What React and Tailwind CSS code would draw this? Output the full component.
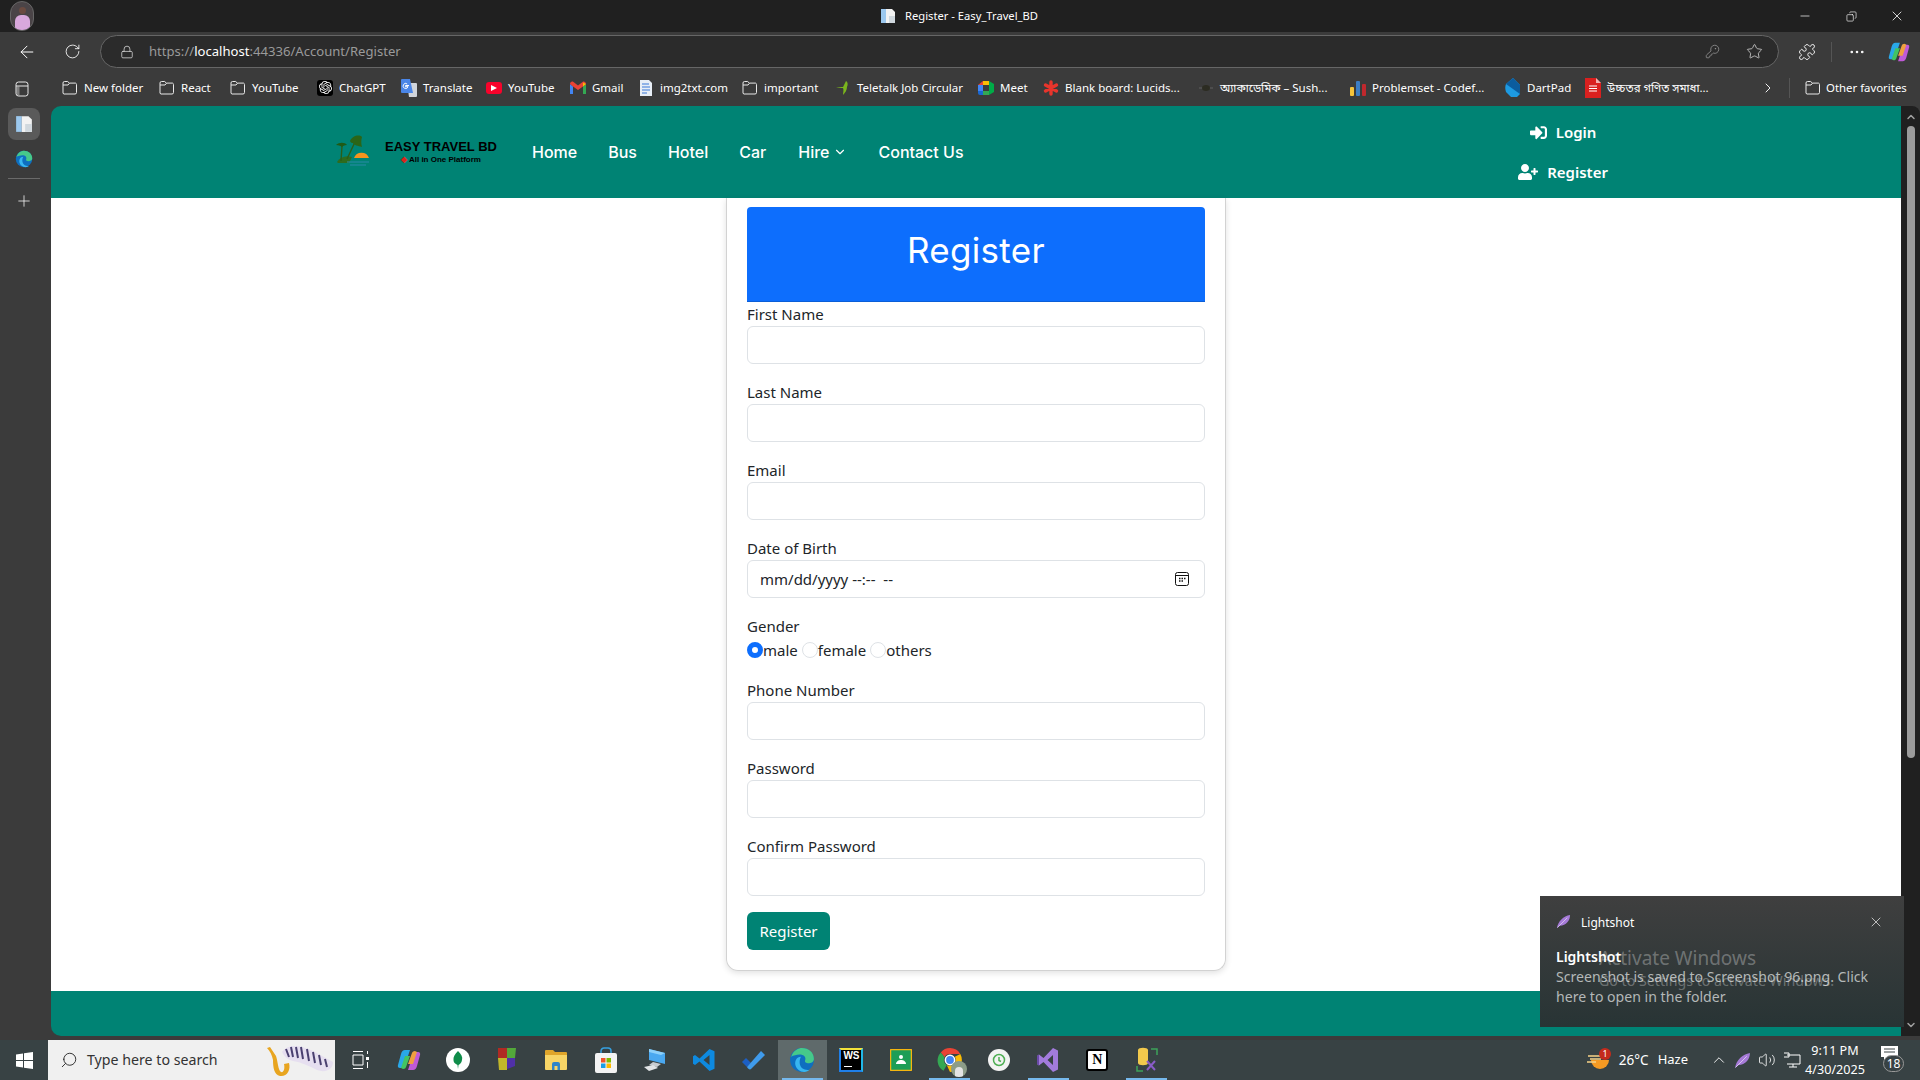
import { ArrowLeft, RotateCw, Lock, KeyRound, Star, Puzzle, MoreHorizontal, ChevronRight, ChevronDown, ChevronUp, Plus, Minus, X, Search, Volume2, Copy } from 'lucide-react'
import { FaSignInAlt, FaUserPlus } from 'react-icons/fa'
import { SiOpenai } from 'react-icons/si'

const FolderIcon = () => (
  <svg width="16" height="16" viewBox="0 0 16 16" fill="none" stroke="#e8e8e8" strokeWidth="1">
    <path d="M2.5 1.5h3.2l1.6 1.6h6.2a1.5 1.5 0 0 1 1 1.4v8a1.5 1.5 0 0 1-1.5 1.5h-10A1.5 1.5 0 0 1 1 13V3a1.5 1.5 0 0 1 1.5-1.5Z" />
    <path d="M1 5h5l1.5-1.8" />
  </svg>
)

const PageIcon = ({ size = 16 }) => (
  <svg width={size} height={size} viewBox="0 0 16 16">
    <path d="M1 1h5v14H1z" fill="#9cc8ee" />
    <path d="M6 1h6l3 3v11H6z" fill="#f2f2f2" />
    <path d="M9 8h6v7H9z" fill="#d0d8de" />
  </svg>
)

const Feather = ({ size = 16 }) => (
  <svg width={size} height={size} viewBox="0 0 16 16">
    <path d="M1 15C2 8 8 2 15 1c0 6-4 11-11 11.5L1 15Z" fill="#a67bd8" />
    <path d="M1.5 14.5 12 4" stroke="#e2d0f5" strokeWidth="0.8" fill="none" />
  </svg>
)

const Edge = ({ size = 16 }) => (
  <svg width={size} height={size} viewBox="0 0 24 24">
    <circle cx="12" cy="12" r="11" fill="#0f6fbf" />
    <path d="M2 9C4 3 9 1 12 1c6 0 11 4 11 10 0 3-3 4-5 4-2 0-4-1-3-3 1-3-2-5-5-5-3 0-6 1-8 2Z" fill="#46c98a" />
    <path d="M11 9c-4 0-6 4-5 8 1 3 4 6 8 6 2 0 4-1 5-2-4 1-8-1-9-5-.5-3 0-5 1-7Z" fill="#38b6f0" />
  </svg>
)

const Copilot = ({ size = 20 }) => (
  <svg width={size} height={size} viewBox="0 0 24 24">
    <path d="M8 2h5l-5 15c-.5 2-2 3-3.500 3H3c-2 0-2.500-1.500-2-3L4 6c.7-2.500 2-4 4-4Z" fill="#29a8e8" />
    <path d="M4 20 8 8h5l-4 11c-.5 1-1 2-3 2Z" fill="#43c463" />
    <path d="M16 22h-5l5-15c.5-2 2-3 3.500-3H21c2 0 2.500 1.500 2 3l-3 11c-.7 2.500-2 4-4 4Z" fill="#c05ad8" />
    <path d="M20 4l-4 12h-5l4-11c.5-1 1-2 3-2Z" fill="#f0a040" />
  </svg>
)

function YouTubeIcon() {
  return (
    <span className="w-4 h-3 rounded-[3px] bg-[#f8032b] flex items-center justify-center">
      <svg width="6" height="6" viewBox="0 0 6 6"><path d="M0 0l6 3-6 3z" fill="#fff" /></svg>
    </span>
  )
}

const bookmarks = [
  { label: 'New folder', w: 'w-[97px]', icon: <FolderIcon /> },
  { label: 'React', w: 'w-[71px]', icon: <FolderIcon /> },
  { label: 'YouTube', w: 'w-[87px]', icon: <FolderIcon /> },
  { label: 'ChatGPT', w: 'w-[84px]', icon: <span className="w-4 h-4 rounded-[3px] bg-black flex items-center justify-center"><SiOpenai size={13} color="#fff" /></span> },
  {
    label: 'Translate', w: 'w-[85px]', icon: (
      <svg width="16" height="18" viewBox="0 0 16 18">
        <path d="M6 4h9a1 1 0 0 1 1 1v12a1 1 0 0 1-1 1H8Z" fill="#d0d4da" />
        <path d="M1 0h8l3 14H1a1 1 0 0 1-1-1V1a1 1 0 0 1 1-1Z" fill="#4a86e8" />
        <path d="M8 6.500H4.500v1.200H7A2.500 2.500 0 1 1 6.200 5" stroke="#fff" strokeWidth="1" fill="none" />
      </svg>
    ),
  },
  { label: 'YouTube', w: 'w-[84px]', icon: <YouTubeIcon /> },
  {
    label: 'Gmail', w: 'w-[68px]', icon: (
      <svg width="16" height="14" viewBox="0 0 16 14">
        <path d="M0 3v10h3V5.500z" fill="#4285f4" />
        <path d="M13 13h3V3l-3 2.500z" fill="#34a853" />
        <path d="M0 3c0-2 2-3 3.500-2L8 4.500l4.500-3.500C14 0 16 1 16 3l-3 2.500L8 9 3 5.500z" fill="#ea4335" />
        <path d="M13 1.500 16 3l-3 2.500z" fill="#fbbc04" />
      </svg>
    ),
  },
  {
    label: 'img2txt.com', w: 'w-[104px]', icon: (
      <svg width="16" height="16" viewBox="0 0 16 16">
        <path d="M2 0h9l3 3v13H2z" fill="#e8eef6" />
        <path d="M4 4h7M4 7h8M4 10h8M4 13h5" stroke="#3a78d8" strokeWidth="1.200" />
      </svg>
    ),
  },
  { label: 'important', w: 'w-[93px]', icon: <FolderIcon /> },
  {
    label: 'Teletalk Job Circular', w: 'w-[143px]', icon: (
      <svg width="16" height="16" viewBox="0 0 16 16">
        <path d="M1 8c3-1 5-1 7-1L11 1c2 1 2 4 1 6 0 3-2 6-4 8 0-3 1-5 0-7-2 0-4 0-7 0Z" fill="#7ab51d" />
      </svg>
    ),
  },
  {
    label: 'Meet', w: 'w-[65px]', icon: (
      <svg width="16" height="16" viewBox="0 0 16 16">
        <path d="M0 5 5 1v4z" fill="#ea4335" />
        <path d="M5 1h6v4H5z" fill="#fbbc04" />
        <path d="M0 5h5v6H0z" fill="#4285f4" />
        <path d="M0 11h5v4H2a2 2 0 0 1-2-2z" fill="#1967d2" />
        <path d="M5 11h6v4H5z" fill="#34a853" />
        <path d="M11 1v14l5-3V4z" fill="#00ac47" />
      </svg>
    ),
  },
  {
    label: 'Blank board: Lucids...', w: 'w-[155px]', icon: (
      <svg width="16" height="16" viewBox="0 0 16 16" stroke="#e8352c" strokeWidth="3.400" strokeLinecap="round">
        <path d="M8 2v12M2.500 5l11 6M13.500 5l-11 6" />
      </svg>
    ),
  },
  {
    label: 'অ্যাকাডেমিক – Sush...', w: 'w-[152px]', icon: (
      <svg width="16" height="16" viewBox="0 0 16 16">
        <path d="M1 8h14" stroke="#555" strokeWidth="1.500" />
        <ellipse cx="8" cy="8" rx="4" ry="3" fill="#2c2c22" />
      </svg>
    ),
  },
  {
    label: 'Problemset - Codef...', w: 'w-[155px]', icon: (
      <svg width="16" height="16" viewBox="0 0 16 16">
        <rect x="0" y="7" width="4" height="9" rx="1" fill="#f5c33b" />
        <rect x="6" y="1" width="4" height="15" rx="1" fill="#3b7dc4" />
        <rect x="12" y="4" width="4" height="12" rx="1" fill="#c0282d" />
      </svg>
    ),
  },
  {
    label: 'DartPad', w: 'w-[80px]', icon: (
      <svg width="16" height="20" viewBox="0 0 16 20">
        <path d="M8 0 1 6c-1 2-1 5 0 8l5 5h6l3-3V7Z" fill="#1d9ae2" />
        <path d="M8 0 15 7v9L1 6Z" fill="#0b5c9e" />
      </svg>
    ),
  },
  {
    label: 'উচ্চতর গণিত সমাধা...', w: 'w-[173px]', icon: (
      <svg width="16" height="20" viewBox="0 0 16 20">
        <path d="M0 0h11l5 5v15H0z" fill="#d9201f" />
        <path d="M11 0l5 5h-5z" fill="#f3b0ae" />
        <path d="M4 8h8M4 10.500h8M4 13h8" stroke="#fff" strokeWidth="1" />
      </svg>
    ),
  },
]

const formGroups = ['First Name', 'Last Name', 'Email']
const lowerGroups = ['Phone Number', 'Password', 'Confirm Password']

const taskIcons = [
  { key: 'taskview', icon: (
    <svg width="20" height="20" viewBox="0 0 20 20" fill="none" stroke="#fff" strokeWidth="1">
      <path d="M3 1.500h10M3 18.500h10M3 5h10v10H3z" />
      <rect x="16" y="7" width="3" height="3" fill="#fff" stroke="none" />
      <path d="M17.500 12v6M17.500 1v3" />
    </svg>
  ) },
  { key: 'copilot', icon: <Copilot size={24} /> },
  { key: 'mongo', icon: (
    <span className="w-[24px] h-[24px] rounded-full bg-white flex items-center justify-center">
      <svg width="10" height="18" viewBox="0 0 10 18"><path d="M5 0c3 3 5 6 4 9-.5 3-2 4-3.500 5L5 18l-.5-4C3 13 .5 12 .5 9 0 6 2 3 5 0Z" fill="#0f8c4a" /></svg>
    </span>
  ) },
  { key: 'blocks', icon: (
    <svg width="22" height="26" viewBox="0 0 22 26">
      <path d="M2 1h9v10H2z" fill="#b02a23" />
      <path d="M11 1h9l-1 10h-8z" fill="#53a83a" />
      <path d="M2 11h9v12H3z" fill="#c2b72a" />
      <path d="M11 11h8v8l-8 3z" fill="#5030a8" />
    </svg>
  ) },
  { key: 'files', icon: (
    <svg width="24" height="22" viewBox="0 0 24 22">
      <path d="M1 2a1 1 0 0 1 1-1h7l2 2h11a1 1 0 0 1 1 1v4H1z" fill="#e0a52a" />
      <path d="M1 6h22v14a1 1 0 0 1-1 1H2a1 1 0 0 1-1-1z" fill="#f8d566" />
      <path d="M8 21v-6a2 2 0 0 1 2-2h4a2 2 0 0 1 2 2v6h-2.500v-4h-3v4z" fill="#2f85c8" />
    </svg>
  ) },
  { key: 'store', icon: (
    <svg width="24" height="26" viewBox="0 0 24 26">
      <path d="M7 7V4a3 3 0 0 1 3-3h4a3 3 0 0 1 3 3v3" fill="none" stroke="#36a0e0" strokeWidth="1.500" />
      <rect x="1" y="6" width="22" height="20" rx="2" fill="#f3f3f3" />
      <path d="M7 11h4.500v4.500H7z" fill="#f0542b" />
      <path d="M12.500 11H17v4.500h-4.500z" fill="#7fba00" />
      <path d="M7 16.500h4.500V21H7z" fill="#1a9ee8" />
      <path d="M12.500 16.500H17V21h-4.500z" fill="#ffb900" />
    </svg>
  ) },
  { key: 'pc', icon: (
    <svg width="24" height="24" viewBox="0 0 24 24">
      <path d="M6 1 22 5v11L6 12Z" fill="#4aa8f0" />
      <path d="M6 1 22 5 18 7 6 4Z" fill="#8dd0fa" />
      <path d="M10 14l8 2-4 3-8-2z" fill="#c8ccd0" />
      <path d="M1 19l9-2 5 3-9 3z" fill="#e2e4e6" />
    </svg>
  ) },
  { key: 'vscode', icon: (
    <svg width="24" height="24" viewBox="0 0 24 24">
      <path fillRule="evenodd" d="M17.500 1 7.500 10.500 3 7 1 8.200v7.600L3 17l4.500-3.500L17.500 23l5-2.200V3.200ZM17.500 7l-6 5 6 5Z" fill="#0e8ae0" />
    </svg>
  ) },
  { key: 'todo', icon: (
    <svg width="24" height="20" viewBox="0 0 24 20">
      <path d="M1 12l4-4 5 5-4 4z" fill="#1c5fc4" />
      <path d="M6 17 20 1l4 4L10 19c-1 1-3 0-4-2Z" fill="#3f9bec" />
    </svg>
  ) },
  { key: 'edge', active: true, underline: true, icon: <Edge size={26} /> },
  { key: 'ws', icon: (
    <span className="relative w-[24px] h-[24px] bg-black flex items-start justify-center border-t-[2px] border-r-[2px] border-t-[#f2e23a] border-r-[#20b8e8] border-l-[2px] border-l-[#1f7fe8] border-b-[2px] border-b-[#1f7fe8]">
      <span className="text-white text-[10px] font-bold leading-[12px] font-['Liberation_Sans',sans-serif]">WS</span>
      <span className="absolute left-[3px] bottom-[3px] w-[8px] h-[1px] bg-white" />
    </span>
  ) },
  { key: 'classroom', icon: (
    <svg width="22" height="22" viewBox="0 0 22 22">
      <rect x="0.500" y="0.500" width="21" height="21" rx="1" fill="#1e9e57" stroke="#f5b60f" strokeWidth="1.500" />
      <circle cx="11" cy="8" r="2" fill="#fff" />
      <path d="M6 15c0-2.500 2.500-4 5-4s5 1.500 5 4z" fill="#fff" />
    </svg>
  ) },
  { key: 'chrome', underline: true, icon: (
    <span className="relative">
      <svg width="26" height="26" viewBox="0 0 24 24">
        <path d="M12 1a11 11 0 0 1 9.500 5.500H12a5.500 5.500 0 0 0-5 3L3.500 5A11 11 0 0 1 12 1Z" fill="#ea4335" />
        <path d="M3.500 5 7 9.500a5.500 5.500 0 0 0 2 7L6 22A11 11 0 0 1 3.500 5Z" fill="#34a853" />
        <path d="M21.500 6.500A11 11 0 0 1 12 23l-3-6.500a5.500 5.500 0 0 0 7.500-7.500Z" fill="#fbbc04" />
        <circle cx="12" cy="12" r="4.300" fill="#4285f4" stroke="#fff" strokeWidth="1.400" />
      </svg>
      <span className="absolute -right-[4px] -bottom-[4px] w-[16px] h-[16px] rounded-full bg-[#8c9c88] flex items-end justify-center overflow-hidden">
        <span className="w-[8px] h-[10px] rounded-t-full bg-[#e4e4e4]" />
      </span>
    </span>
  ) },
  { key: 'clock', icon: (
    <span className="w-[22px] h-[22px] rounded-full bg-[#f3f3f3] flex items-center justify-center">
      <svg width="14" height="14" viewBox="0 0 14 14" fill="none" stroke="#4fae54" strokeWidth="1.500">
        <circle cx="7" cy="7" r="5.500" />
        <path d="M7 4v3.500l2 1" />
      </svg>
    </span>
  ) },
  { key: 'vs', underline: true, icon: (
    <svg width="24" height="26" viewBox="0 0 24 26">
      <path fillRule="evenodd" d="M17 1 7.500 11 3 7.500 1 9v8l2 1.500L7.500 15 17 25l5-2.500v-19ZM17 8l-5.500 5 5.500 5Z" fill="#a27bdc" />
      <path d="M1 9l2-1.500v11L1 17z" fill="#6a4aa8" />
    </svg>
  ) },
  { key: 'notion', icon: (
    <span className="w-[22px] h-[22px] bg-white rounded-[3px] border-[2px] border-black flex items-center justify-center">
      <span className="text-black text-[14px] font-bold leading-none font-['Liberation_Serif',serif]">N</span>
    </span>
  ) },
  { key: 'dbtool', underline: true, icon: (
    <svg width="24" height="26" viewBox="0 0 24 26" fill="none">
      <path d="M16 2h6v6M2 19v5h6" stroke="#3da35a" strokeWidth="1.500" />
      <path d="M3 3c0-3 10-3 10 0v13c0 3-10 3-10 0z" fill="#f2c94c" />
      <path d="M12 14l8 9M20 14l-8 9" stroke="#8a5cc8" strokeWidth="2" />
    </svg>
  ) },
]

function Field({ label }) {
  return (
    <div className="mb-4">
      <label className="block h-6 leading-6 text-[15px] text-[#212529]">{label}</label>
      <input type="text" className="block w-full h-[38px] border border-[#dee2e6] rounded-md bg-white px-3 outline-none" />
    </div>
  )
}

function Radio({ label, checked }) {
  return (
    <label className="flex items-center text-[15px] text-[#212529]">
      <input
        type="radio"
        name="gender"
        defaultChecked={checked}
        className="appearance-none w-4 h-4 rounded-full border border-[#dee2e6] bg-white checked:border-[5px] checked:border-[#0d6efd]"
      />
      {label}
    </label>
  )
}

export default function App() {
  return (
    <div className="relative w-[1920px] h-[1080px] overflow-hidden flex flex-col bg-[#3b3b3b] font-['Noto_Sans',sans-serif]">

      {/* Title bar */}
      <div className="h-8 bg-[#202020] grid grid-cols-3 items-center flex-shrink-0">
        <div className="pl-[10px]">
          <div className="relative w-[24px] h-[30px] rounded-full bg-[#4a4447] overflow-hidden border border-[#666]">
            <span className="absolute left-[8px] top-[5px] w-[7px] h-[7px] rounded-full bg-[#6a4a40]" />
            <span className="absolute left-[4px] top-[13px] w-[15px] h-[16px] rounded-t-md bg-[#d9a8dc]" />
          </div>
        </div>
        <div className="flex items-center justify-center gap-[9px] pr-[2px]">
          <PageIcon size={16} />
          <span className="text-[11.2px] text-white whitespace-nowrap">Register - Easy_Travel_BD</span>
        </div>
        <div className="flex items-center justify-end text-white">
          <span className="w-[46px] flex justify-center"><Minus size={14} strokeWidth={1.2} /></span>
          <span className="w-[46px] flex justify-center"><Copy size={11} strokeWidth={1.4} className="-scale-x-100" /></span>
          <span className="w-[46px] flex justify-center"><X size={16} strokeWidth={1.2} /></span>
        </div>
      </div>

      {/* Toolbar */}
      <div className="h-[37px] flex items-center text-white flex-shrink-0 pb-[1px] pt-[3px]">
        <span className="w-[54px] flex justify-center"><ArrowLeft size={20} strokeWidth={1.2} /></span>
        <span className="w-[36px] flex justify-center"><RotateCw size={17} strokeWidth={1.2} /></span>
        <div className="ml-[10px] w-[1679px] h-[33px] rounded-full border border-[#666] bg-[#2b2b2b] flex items-center">
          <Lock size={14} strokeWidth={1.3} className="ml-[19px] text-[#ddd]" />
          <span className="ml-[15px] text-[13.1px] text-[#9a9a9a] whitespace-nowrap">
            https://<span className="text-white">localhost</span>:44336/Account/Register
          </span>
          <div className="ml-auto flex items-center gap-[26px] pr-[15px] text-[#9a9a9a]">
            <KeyRound size={15} strokeWidth={1.2} />
            <Star size={17} strokeWidth={1.2} className="text-[#ccc]" />
          </div>
        </div>
        <span className="ml-[18px] w-[20px] flex justify-center"><Puzzle size={18} strokeWidth={1.2} /></span>
        <span className="ml-[14px] w-[1px] h-[20px] bg-[#555]" />
        <span className="ml-[15px] w-[20px] flex justify-center"><MoreHorizontal size={18} strokeWidth={1.5} /></span>
        <span className="ml-[21px]"><Copilot size={22} /></span>
      </div>

      {/* Favorites bar */}
      <div className="h-[37px] flex items-center text-white flex-shrink-0">
        <span className="w-[62px] pl-[15px] pt-[3px]">
          <svg width="14" height="16" viewBox="0 0 14 16" fill="none" stroke="#e8e8e8" strokeWidth="1">
            <rect x="1" y="1" width="12" height="14" rx="2.500" />
            <path d="M1 5h12" />
            <path d="M1.500 5.500h3v9h-1a2 2 0 0 1-2-2z" fill="#e8e8e8" fillOpacity="0.4" stroke="none" />
          </svg>
        </span>
        {bookmarks.map(b => (
          <div key={b.label + b.w} className={`${b.w} flex items-center gap-[6px] flex-shrink-0`}>
            <span className="w-4 flex justify-center">{b.icon}</span>
            <span className="text-[11.5px] whitespace-nowrap font-['Noto_Sans','Noto_Sans_Bengali',sans-serif]">{b.label}</span>
          </div>
        ))}
        <ChevronRight size={16} strokeWidth={1.4} className="ml-[2px]" />
        <span className="ml-[13px] w-[1px] h-[20px] bg-[#555]" />
        <span className="ml-[15px]"><FolderIcon /></span>
        <span className="ml-[5px] text-[11.4px] whitespace-nowrap">Other favorites</span>
      </div>

      {/* Browser body */}
      <div className="flex h-[930px] flex-shrink-0">
        <div className="w-[51px] flex-shrink-0 flex flex-col items-center pt-[2px] pr-[4px] text-white">
          <div className="w-8 h-8 rounded-lg bg-[#5a5a5a] flex items-center justify-center"><PageIcon size={18} /></div>
          <div className="mt-[10px]"><Edge size={18} /></div>
          <div className="mt-[10px] w-8 h-[1px] bg-[#6a6a6a]" />
          <Plus size={18} strokeWidth={1} className="mt-[13px]" />
        </div>

        <div className="w-[1850px] flex flex-col rounded-l-[10px] overflow-hidden">
          <nav className="h-[92px] bg-[#008374] flex items-center flex-shrink-0 text-white">
            <div className="ml-[284px] w-[165px] h-[40px] flex items-center flex-shrink-0">
              <svg width="36" height="36" viewBox="0 0 36 36" className="flex-shrink-0">
                <path d="M2 28c3-5 9-7 15-5l-3 6H3Z" fill="#2e6b1e" />
                <path d="M6 27 7 12M12 25 20 8" stroke="#2a5e18" strokeWidth="1.400" />
                <path d="M1 11c3-3 9-3 11 0-3 0-4 1-5 2-1-1-3-2-6-2Z" fill="#1f5a15" />
                <path d="M15 7c2-5 9-7 12-4-1 3-1 7 0 10-4-1-8-2-9-4-1 0-2 0-3-2Z" fill="#2a6518" />
                <path d="M19 24a8 8 0 0 1 15 0Z" fill="#f7941d" />
                <path d="M12 28h22M15 31h16" stroke="#2a8aa8" strokeWidth="1.200" />
              </svg>
              <div className="ml-[14px] flex flex-col items-center leading-none font-['Liberation_Sans',sans-serif] text-black whitespace-nowrap">
                <span className="text-[13px] font-bold leading-[16px]">EASY TRAVEL BD</span>
                <span className="text-[8px] font-bold leading-[10px]"><span className="text-[#d8261c]">◆ </span>All in One Platform</span>
              </div>
            </div>
            <div className="ml-[32px] flex items-center gap-[31px] text-[16px] font-medium font-['Inter',sans-serif] whitespace-nowrap">
              <span>Home</span>
              <span>Bus</span>
              <span>Hotel</span>
              <span>Car</span>
              <span className="flex items-center gap-[4px] pl-[1px]">Hire <ChevronDown size={14} /></span>
              <span>Contact Us</span>
            </div>
            <div className="ml-auto mr-[293px] flex flex-col items-center gap-[16px] text-[15px] font-semibold">
              <span className="flex items-center gap-[9px] leading-6"><FaSignInAlt size={17} /> Login</span>
              <span className="flex items-center gap-[9px] leading-6"><FaUserPlus size={20} /> Register</span>
            </div>
          </nav>

          <main className="flex-1 bg-white">
            <div className="mx-auto w-[500px] h-[773px] border border-t-0 border-[#d2d2d2] rounded-b-xl shadow-[0_2px_6px_rgba(0,0,0,0.12)] px-5 pt-[9px] pb-5">
              <div className="h-[95px] bg-[#0d6efd] rounded-t-[4px] border-b border-[#0b5ed7] flex justify-center pt-[22px]">
                <h1 className="text-[35px] leading-[42px] tracking-[0.3px] text-white font-['Inter',sans-serif]">Register</h1>
              </div>
              {formGroups.map(label => <Field key={label} label={label} />)}
              <div className="mb-4">
                <label className="block h-6 leading-6 text-[15px] text-[#212529]">Date of Birth</label>
                <div className="w-full h-[38px] border border-[#dee2e6] rounded-md bg-white pl-3 pr-[15px] flex items-center justify-between text-[15px] text-[#212529]">
                  <span className="whitespace-pre">mm/dd/yyyy --:--  --</span>
                  <svg width="14" height="14" viewBox="0 0 14 14" fill="none" stroke="#111" strokeWidth="1">
                    <rect x="0.500" y="0.500" width="13" height="13" rx="2" />
                    <path d="M0.500 3.500h13" />
                    <path d="M4 6.500h1.500M6.500 6.500H8M9 6.500h1.500M4 9h1.500M6.500 9H8" strokeWidth="1.400" />
                  </svg>
                </div>
              </div>
              <div className="mb-4">
                <label className="block h-6 leading-6 text-[15px] text-[#212529]">Gender</label>
                <div className="h-6 flex items-center gap-[4px]">
                  <Radio label="male" checked />
                  <Radio label="female" />
                  <Radio label="others" />
                </div>
              </div>
              {lowerGroups.map(label => <Field key={label} label={label} />)}
              <button className="w-[83px] h-[38px] rounded-md bg-[#008374] text-white text-[15px]">Register</button>
            </div>
          </main>

          <footer className="h-[45px] bg-[#008374] flex-shrink-0" />
        </div>

        {/* Scrollbar */}
        <div className="w-[19px] flex-shrink-0 bg-[#202020] rounded-tr-lg flex flex-col items-center pt-[5px]">
          <ChevronUp size={12} strokeWidth={3} className="text-[#a0a0a0]" />
          <div className="mt-[3px] w-[8px] h-[632px] rounded-full bg-[#9b9b9b]" />
          <ChevronDown size={12} strokeWidth={3} className="text-[#a0a0a0] mt-auto mb-[5px]" />
        </div>
      </div>

      <div className="h-[4px] flex-shrink-0" />

      {/* Taskbar */}
      <div className="h-[40px] bg-[#384244] flex items-stretch text-white flex-shrink-0">
        <div className="w-[48px] flex items-center justify-center">
          <svg width="17" height="17" viewBox="0 0 17 17" fill="#fff">
            <path d="M0 2.500 7 1.500V8H0zM8 1.300 17 0v8H8zM0 9h7v6.500L0 14.500zM8 9h9v8l-9-1.300z" />
          </svg>
        </div>
        <div className="w-[287px] bg-[#f0f0f0] flex items-center relative">
          <Search size={18} strokeWidth={1.2} className="ml-[12px] text-[#222] -scale-x-100" />
          <span className="ml-[9px] text-[14.2px] text-[#333] whitespace-nowrap">Type here to search</span>
          <svg className="absolute right-0 top-0" width="68" height="40" viewBox="0 0 68 40">
            <path d="M15 12C20 5 30 5 38 8c10 3 17 8 28 14 0 8-8 11-16 8-8-4-16-8-24-9-4-1-8-3-11-9Z" fill="#e6dff0" />
            <path d="M19 9l3 8M24 7l2 10M29 7l2 11M34 7l2 12M40 9l2 12M46 12l2 11M52 15l2 10M58 19l2 8" stroke="#4a4070" strokeWidth="2" />
            <path d="M0 8l3-1 6 9c2 6 2 14 5 16 3 1 4-4 3-8l5-1c2 7-2 14-9 13-6-1-7-9-7-16C5 15 3 11 0 8Z" fill="#e8a520" />
          </svg>
        </div>
        <div className="flex items-stretch">
          {taskIcons.map(t => (
            <div
              key={t.key}
              className={t.active
                ? 'relative w-[49.2px] flex items-center justify-center bg-[#5f6a6b]'
                : 'relative w-[49.2px] flex items-center justify-center'}
            >
              {t.icon}
              {t.underline && <span className="absolute left-[4px] right-[4px] bottom-0 h-[2px] bg-[#76b9ed]" />}
            </div>
          ))}
        </div>
        <div className="ml-auto flex items-center pr-[16px]">
          <svg width="24" height="24" viewBox="0 0 24 24" className="relative">
            <path d="M4 12a9 9 0 0 0 18 0Z" fill="#f59a23" />
            <path d="M1 8h12M3 11h11M0 14h9" stroke="#f8d488" strokeWidth="1.500" />
            <circle cx="18" cy="6" r="6" fill="#c42b1c" />
            <text x="18" y="9" fontSize="9" fill="#fff" textAnchor="middle">1</text>
          </svg>
          <span className="ml-[8px] text-[13.5px] whitespace-nowrap">26°C</span>
          <span className="ml-[9px] text-[13px] whitespace-nowrap">Haze</span>
          <ChevronUp size={18} strokeWidth={1.2} className="ml-[22px]" />
          <span className="ml-[6px]"><Feather size={17} /></span>
          <Volume2 size={18} strokeWidth={1.1} className="ml-[7px]" />
          <svg width="18" height="16" viewBox="0 0 18 16" fill="none" stroke="#fff" strokeWidth="1" className="ml-[7px]">
            <path d="M4 3h13v9H4M10 12v3M6 15h8M1 1h5v4H1" />
          </svg>
          <div className="ml-[4px] w-[60px] flex flex-col items-center text-[12.6px] leading-[19px] whitespace-nowrap">
            <span>9:11 PM</span>
            <span>4/30/2025</span>
          </div>
          <div className="ml-[13px] relative w-[26px] h-[30px]">
            <svg width="17" height="14" viewBox="0 0 17 14" className="absolute left-[3px] top-[1px]">
              <path d="M0 0h17v11H6l-3 3v-3H0z" fill="#fff" />
              <path d="M3 3h11M3 6h11" stroke="#384244" strokeWidth="1" />
            </svg>
            <span className="absolute left-[5px] top-[10px] w-[21px] h-[17px] rounded-full bg-[#384244] border border-[#999] text-[12px] leading-[15px] text-center">18</span>
          </div>
        </div>
      </div>

      {/* Lightshot toast */}
      <div className="absolute left-[1540px] top-[896px] w-[364px] h-[131px] bg-gradient-to-b from-[#3f3f3f] to-[#283435] text-white">
        <div className="absolute left-[16px] top-[18px]"><Feather size={15} /></div>
        <span className="absolute left-[41px] top-[18px] text-[12px] leading-[18px]">Lightshot</span>
        <X size={16} strokeWidth={1.2} className="absolute right-[20px] top-[18px] text-[#ddd]" />
        <p className="absolute left-[16px] top-[51px] text-[14px] leading-[20px] font-semibold">Lightshot</p>
        <p className="absolute left-[16px] top-[71px] w-[330px] text-[14.1px] leading-[20px] text-[#b4b8b8]">Screenshot is saved to Screenshot 96.png. Click here to open in the folder.</p>
      </div>

      {/* Windows watermark */}
      <div className="absolute left-[1599px] top-[945px] text-white/30 pointer-events-none whitespace-nowrap">
        <p className="text-[19px] leading-[26px]">Activate Windows</p>
        <p className="text-[14.2px] leading-[20px]">Go to Settings to activate Windows.</p>
      </div>
    </div>
  )
}
